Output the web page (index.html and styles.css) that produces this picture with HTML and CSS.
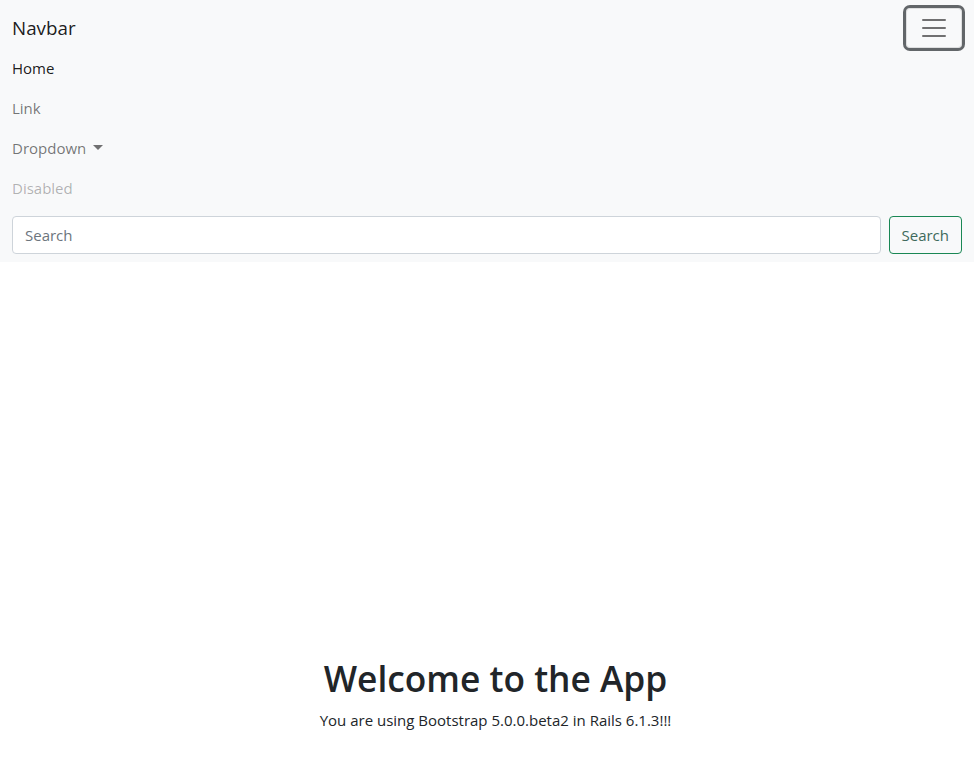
FILE: index.html
```html
<!DOCTYPE html>
<html lang="en">
<head>
<meta charset="utf-8">
<title>App</title>
<link rel="stylesheet" href="styles.css">
</head>
<body>
<nav class="navbar">
  <div class="nav-inner">
    <div class="nav-top">
      <a class="brand" href="#">Navbar</a>
      <button class="toggler" type="button" aria-label="Toggle navigation">
        <svg class="toggler-icon" viewBox="0 0 30 30" width="30" height="30"><path d="M4 7h22M4 15h22M4 23h22" stroke="rgba(0,0,0,0.55)" stroke-width="2" stroke-linecap="round" stroke-miterlimit="10"/></svg>
      </button>
    </div>
    <ul class="nav-list">
      <li><a class="nav-link active" href="#">Home</a></li>
      <li><a class="nav-link" href="#">Link</a></li>
      <li><a class="nav-link dropdown" href="#">Dropdown</a></li>
      <li><a class="nav-link disabled" href="#">Disabled</a></li>
    </ul>
    <form class="search-form">
      <input class="search-input" type="search" placeholder="Search">
      <button class="search-btn" type="button">Search</button>
    </form>
  </div>
</nav>
<main class="main">
  <h1 class="title">Welcome to the App</h1>
  <p class="subtitle">You are using Bootstrap 5.0.0.beta2 in Rails 6.1.3!!!</p>
</main>
</body>
</html>
```
FILE: styles.css
```css
* { box-sizing: border-box; }
html, body { margin: 0; padding: 0; }
body {
  font-family: "Open Sans", "Noto Sans", sans-serif;
  font-size: 15px;
  line-height: 24px;
  color: #212529;
  background: #fff;
}
.navbar {
  background: #f8f9fa;
  padding: 8px 0;
}
.nav-inner {
  padding: 0 12px;
}
.nav-top {
  display: flex;
  justify-content: space-between;
  align-items: center;
}
.brand {
  font-size: 18.8px;
  line-height: 30px;
  padding: 5px 0;
  color: rgba(0,0,0,.9);
  text-decoration: none;
}
.toggler {
  width: 56px;
  height: 40px;
  padding: 4px 12px;
  border: 1px solid rgba(0,0,0,.1);
  border-radius: 4px;
  background: transparent;
  box-shadow: 0 0 0 3px #626669;
  display: flex;
  align-items: center;
  justify-content: center;
}
.toggler-icon { display: block; }
.nav-list {
  list-style: none;
  margin: 0 0 8px;
  padding: 0;
}
.nav-link {
  display: block;
  padding: 8px 0;
  color: rgba(0,0,0,.55);
  text-decoration: none;
}
.nav-link.active { color: rgba(0,0,0,.9); }
.nav-link.disabled { color: rgba(0,0,0,.3); }
.nav-link.dropdown::after {
  content: "";
  display: inline-block;
  margin-left: 7px;
  vertical-align: 4px;
  border-top: 5px solid;
  border-left: 5px solid transparent;
  border-right: 5px solid transparent;
}
.search-form {
  display: flex;
  gap: 8px;
}
.search-input {
  flex: 1;
  height: 38px;
  padding: 6px 12px;
  font: inherit;
  color: #212529;
  border: 1px solid #ced4da;
  border-radius: 4px;
  background: #fff;
}
.search-input::placeholder { color: #6c757d; }
.search-btn {
  height: 38px;
  padding: 6px 12px;
  font: inherit;
  color: #3e6a5c;
  background: transparent;
  border: 1px solid #198754;
  border-radius: 4px;
}
.main {
  padding-top: 394px;
  padding-left: 17px;
  text-align: center;
}
.title {
  margin: 0 0 8px;
  font-size: 35.3px;
  line-height: 44px;
  font-weight: 600;
}
.subtitle {
  margin: 0;
}
```
